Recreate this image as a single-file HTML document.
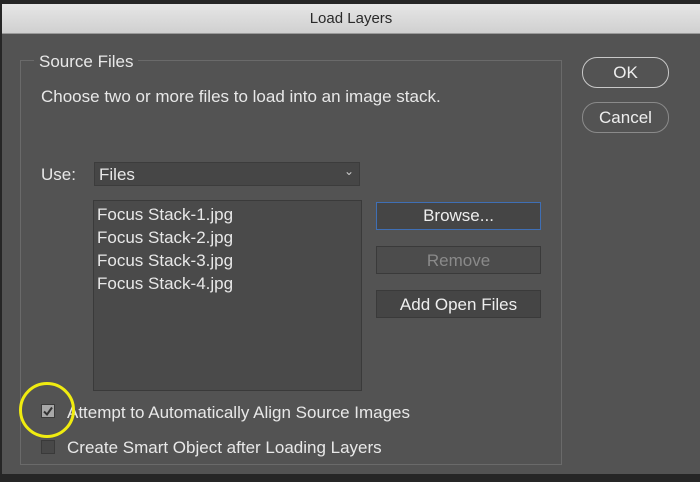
<!DOCTYPE html>
<html><head><style>
body{margin:0;width:700px;height:482px;background:#262626;overflow:hidden;font-family:"Liberation Sans",sans-serif;position:relative}
.dlg{position:absolute;left:2px;top:4px;width:698px;height:470px;background:#535353}
.title{position:absolute;left:0;top:0;width:100%;height:29px;background:linear-gradient(#e6e6e6,#d0d0d0);border-bottom:1px solid #9a9a9a;text-align:center;font-size:15px;line-height:29px;color:#2a2a2a}
.a{position:absolute;color:#e8e8e8;font-size:17px;white-space:nowrap}
.grp{position:absolute;left:20px;top:60px;width:540px;height:403px;border:1px solid #6a6a6a}
.btn{position:absolute;box-sizing:border-box;text-align:center;font-size:17px;color:#eee;background:#454545;border:1px solid #3a3a3a}
.pill{position:absolute;box-sizing:border-box;border:1.5px solid #c8c8c8;border-radius:15px;text-align:center;color:#eee;font-size:17px}
.cb{position:absolute;width:14px;height:14px;border:1px solid #3a3a3a;box-sizing:border-box}
</style></head><body>
<div class="dlg">
<div class="title">Load Layers</div>
</div>
<div class="grp"></div>
<div class="a" style="left:34px;top:51px;background:#535353;padding:0 5px;line-height:22px">Source Files</div>
<div class="a" style="left:41px;top:87px">Choose two or more files to load into an image stack.</div>
<div class="a" style="left:41px;top:165px">Use:</div>
<div style="position:absolute;left:94px;top:162px;width:266px;height:24px;background:#464646;border:1px solid #3c3c3c;box-sizing:border-box"></div>
<div class="a" style="left:99px;top:165px">Files</div>
<div class="a" style="left:344px;top:164px;font-size:12px;color:#ccc">&#8964;</div>
<div style="position:absolute;left:93px;top:200px;width:269px;height:191px;background:#4a4a4a;border:1px solid #3a3a3a;box-sizing:border-box"></div>
<div class="a" style="left:97px;top:203px;line-height:23px">Focus Stack-1.jpg<br>Focus Stack-2.jpg<br>Focus Stack-3.jpg<br>Focus Stack-4.jpg</div>
<div class="btn" style="left:376px;top:202px;width:165px;height:28px;line-height:25px;border:1.5px solid #3f6fb5">Browse...</div>
<div class="btn" style="left:376px;top:246px;width:165px;height:28px;line-height:27px;color:#8a8a8a;background:#4c4c4c">Remove</div>
<div class="btn" style="left:376px;top:290px;width:165px;height:28px;line-height:27px">Add Open Files</div>
<div class="pill" style="left:582px;top:57px;width:87px;height:31px;line-height:29px">OK</div>
<div class="pill" style="left:582px;top:102px;width:87px;height:31px;line-height:29px;border-color:#8a8a8a">Cancel</div>
<div class="cb" style="left:41px;top:404px;background:#a8a8a8"></div>
<svg style="position:absolute;left:41px;top:404px" width="14" height="14"><path d="M3 7.5 L6 10.5 L11 3.5" stroke="#333" stroke-width="2" fill="none"/></svg>
<div class="a" style="left:67px;top:403px">Attempt to Automatically Align Source Images</div>
<div class="cb" style="left:41px;top:440px;background:#484848"></div>
<div class="a" style="left:67px;top:438px">Create Smart Object after Loading Layers</div>
<div style="position:absolute;left:19px;top:382px;width:50px;height:50px;border:3px solid #f0ec10;border-radius:50%"></div>
</body></html>
